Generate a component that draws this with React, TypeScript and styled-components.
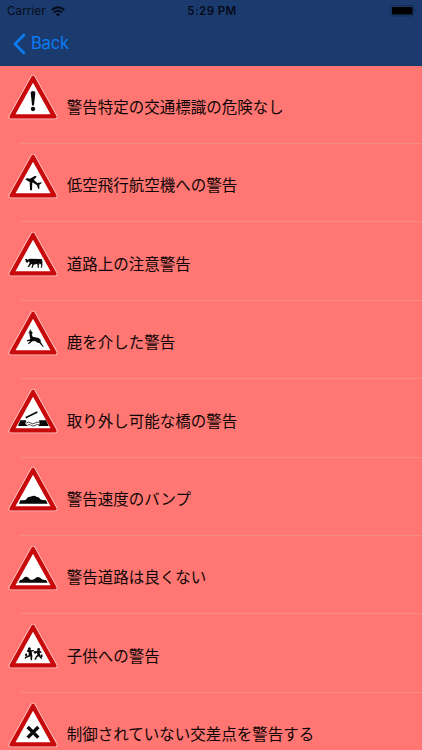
import React from 'react';
import styled, { createGlobalStyle } from 'styled-components';

const GlobalStyle = createGlobalStyle`
  * { box-sizing: border-box; }
  html, body { margin: 0; background: #ff7672; overflow: hidden; }
`;

const Screen = styled.main`
  width: 422px;
  height: 750px;
  overflow: hidden;
  display: flex;
  flex-direction: column;
  background: #ff7672;
  color: #100505;
  font-family: Inter, 'Noto Sans CJK JP', sans-serif;
`;

const Header = styled.header`
  flex: none;
  height: 65.6px;
  background: #1b3b6f;
`;

const StatusBar = styled.div`
  height: 22px;
  display: grid;
  grid-template-columns: 1fr auto 1fr;
  align-items: center;
  padding: 0 5px 0 7px;
  color: #050b16;
  font-size: 11.5px;
  line-height: 22px;
`;

const Carrier = styled.div`
  display: flex;
  align-items: center;
  gap: 5.5px;
  letter-spacing: 0.14px;
`;

const Clock = styled.div`
  font-weight: 600;
  letter-spacing: 0.42px;
`;

const Battery = styled.svg`
  justify-self: end;
  display: block;
`;

const BackButton = styled.button`
  display: flex;
  align-items: center;
  gap: 5px;
  height: 43px;
  padding: 0 0 0 13px;
  border: 0;
  background: none;
  color: #0c7cf4;
  font: 400 16.6px/43px Inter, sans-serif;
  letter-spacing: -0.25px;
`;

const List = styled.ul`
  list-style: none;
  margin: 0;
  padding: 0;
`;

const Row = styled.li`
  display: flex;
  height: 78.4px;
  background: linear-gradient(#f68c88, #f68c88) 20px 100% / 402px 1px no-repeat;
`;

const SignBox = styled.svg`
  flex: none;
  display: block;
  width: 66.7px;
  height: 60px;
  margin-top: 0.8px;
`;

const Label = styled.span`
  padding-top: 29.4px;
  font: 400 15.5px/23px 'Noto Sans CJK JP', sans-serif;
  white-space: nowrap;
`;

const Sign = ({ children }: { children: React.ReactNode }) => (
  <SignBox viewBox="0 0 200 180">
    <path d="M99 34 L33 152 H165 Z" fill="#ffc9c6" stroke="#ffc9c6" strokeWidth="15" strokeLinejoin="round" />
    <path d="M99 34 L33 152.500 H165 Z" fill="#c90a0c" stroke="#c90a0c" strokeWidth="10" strokeLinejoin="round" />
    <path d="M99 50 L46.500 144.500 H151.500 Z" fill="#fff" />
    <g fill="#090909">{children}</g>
  </SignBox>
);

const Danger = (
  <>
    <path d="M92 80 Q92 75 99 75 Q106 75 106 80 L102 117 Q99 121 96 117 Z" />
    <circle cx="99" cy="129" r="6.500" />
  </>
);

const Plane = (
  <path d="M77 101 Q83 98 90 101 L104 93 Q111 92 109 97 L101 104 L112 114 L124 112 Q126 113 124 115 L118 119 L118 131 Q115 133 114 130 L111 121 L97 112 L96 135 Q92 138 90 134 L89 111 Q82 107 77 104 Z" />
);

const Cow = (
  <path d="M75 108 L80 108 L83 110 L89 107 L124 108 Q127 109 127 114 L127 130 L125 134 L122 134 L124 126 L119 121 L116 128 L117 134 L113 134 L112 122 L101 125 L98 134 L94 135 L97 125 L94 122 L88 131 L82 133 L85 128 L89 119 L86 115 L82 119 L77 117 L77 112 Z" />
);

const Deer = (
  <path d="M86 82 L90 88 L92 81 L94 88 L98 92 L97 95 L95 97 L98 104 L116 108 L122 114 L122 120 L131 134 L129 135 L118 123 L113 122 L105 117 L97 118 L86 127 L84 124 L91 117 L82 118 L80 115 L91 112 L89 102 L88 94 L84 92 L89 90 Z" />
);

const Bridge = (
  <>
    <path d="M54 138 L61 121 H79 L76 131 L83 138 Z M117 121 H138 L146 138 H115 L119 131 Z" />
    <path d="M77 113 L112 96" stroke="#090909" strokeWidth="5" fill="none" />
    <path d="M79 129 Q86 124 92 129 T105 129 T118 128 M82 136 Q88 131 94 136 T106 136 T117 135" stroke="#222" strokeWidth="2.500" fill="none" />
  </>
);

const Hump = (
  <path d="M57 137 L61 127 Q72 127 76 126 L85 117 Q91 117 97 114 Q105 112 110 117 Q117 116 121 124 Q125 127 138 127 L143 137 Z" />
);

const Uneven = (
  <path d="M56 137 L60 129 Q67 130 71 123 Q78 116 85 122 L91 128 Q99 130 106 124 Q115 116 124 125 Q129 130 138 129 L143 137 Z" />
);

const Children = (
  <>
    <circle cx="88" cy="101" r="4.500" />
    <circle cx="116" cy="103" r="4" />
    <path d="M86 104 L94 106 L102 105 L102 108 L95 110 L97 122 L96 136 L92 136 L91 124 L86 126 L78 129 L77 133 L74 129 L76 125 L86 121 L86 112 L80 109 L83 104 Z" />
    <path d="M112 106 H119 L125 112 L123 115 L119 112 L121 122 L127 130 L124 132 L116 124 L111 127 L107 135 L103 133 L108 124 L112 119 L111 113 L104 114 L102 111 L109 109 Z" />
    <path d="M100 111 L106 107 L110 113 L105 117 Z M121 120 L127 118 L128 125 L123 126 Z M74 118 L80 115 L82 122 L77 124 Z" />
  </>
);

const Crossing = (
  <path d="M83 99 L115 131 M115 99 L83 131" stroke="#090909" strokeWidth="10" fill="none" />
);

const warnings = [
  { label: '警告特定の交通標識の危険なし', drawing: Danger },
  { label: '低空飛行航空機への警告', drawing: Plane },
  { label: '道路上の注意警告', drawing: Cow },
  { label: '鹿を介した警告', drawing: Deer },
  { label: '取り外し可能な橋の警告', drawing: Bridge },
  { label: '警告速度のバンプ', drawing: Hump },
  { label: '警告道路は良くない', drawing: Uneven },
  { label: '子供への警告', drawing: Children },
  { label: '制御されていない交差点を警告する', drawing: Crossing },
];

export default function App() {
  return (
    <Screen>
      <GlobalStyle />
      <Header>
        <StatusBar>
          <Carrier>
            Carrier
            <svg width="14" height="11" viewBox="0 0 14 11" fill="none" stroke="#050b16" strokeWidth="2">
              <path d="M0.700 4 Q7 -1.600 13.300 4" />
              <path d="M3 6.600 Q7 3 11 6.600" />
              <path d="M4.900 8.200 Q7 6.500 9.100 8.200 L7 10.500 Z" fill="#050b16" stroke="none" />
            </svg>
          </Carrier>
          <Clock>5:29 PM</Clock>
          <Battery width="27" height="12" viewBox="0 0 27 12">
            <rect x="0.500" y="0.500" width="23.500" height="10.500" rx="3" fill="none" stroke="#132b51" />
            <rect x="2" y="2" width="20.500" height="7.500" rx="1.300" fill="#000" />
            <path d="M25.300 4 Q26.800 5.700 25.300 7.500 Z" fill="#132b51" />
          </Battery>
        </StatusBar>
        <BackButton>
          <svg width="13" height="22" viewBox="0 0 13 22" fill="none" stroke="currentColor" strokeWidth="2.700">
            <path d="M11.700 1.200 L2 11 L11.700 20.800" />
          </svg>
          Back
        </BackButton>
      </Header>
      <List>
        {warnings.map(({ label, drawing }) => (
          <Row key={label}>
            <Sign>{drawing}</Sign>
            <Label>{label}</Label>
          </Row>
        ))}
      </List>
    </Screen>
  );
}
